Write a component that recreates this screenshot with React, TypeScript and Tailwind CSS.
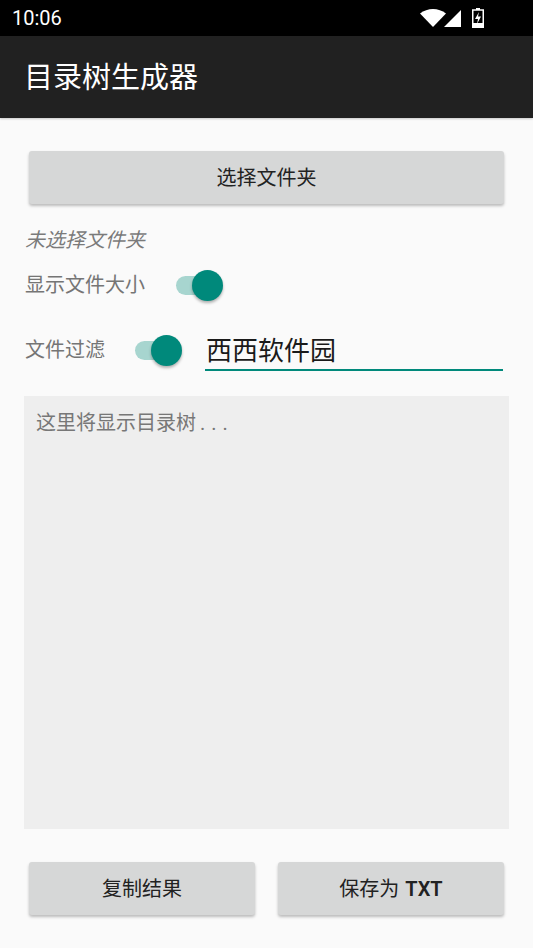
import React from "react";

const cjk = { fontFamily: 'Roboto, "Noto Sans CJK SC", sans-serif' };

function Switch() {
  return (
    <div className="relative w-[47px] h-[32px] shrink-0">
      <div className="absolute left-0 top-[7px] w-[38px] h-[19px] rounded-full bg-[#a7d5cf]" />
      <div className="absolute left-[16px] top-[1px] w-[31px] h-[31px] rounded-full bg-[#00897b] shadow-[0_2px_3px_rgba(0,0,0,0.3)]" />
    </div>
  );
}

export default function App() {
  return (
    <div className="w-[533px] h-[948px] bg-[#fafafa] flex flex-col overflow-hidden" style={cjk}>
      {/* status bar */}
      <div className="h-[36px] bg-black flex items-center px-[12px] text-white">
        <span className="text-[20px] leading-none" style={{ fontFamily: "Roboto, sans-serif" }}>10:06</span>
        <div className="ml-auto flex items-center mr-[37px]">
          <svg width="26" height="18" viewBox="0 0 26 18">
            <path d="M0 4.5 C7.5 -1.5 18.5 -1.5 26 4.5 L13 18 Z" fill="white" />
          </svg>
          <svg width="17" height="17" viewBox="0 0 17 17" className="ml-[-2px]">
            <path d="M17 0 L17 17 L0 17 Z" fill="white" />
          </svg>
          <svg width="12" height="20" viewBox="0 0 12 20" className="ml-[11px]">
            <rect x="4" y="0" width="4" height="2" fill="white" />
            <rect x="0.75" y="2" width="10.5" height="17.25" fill="none" stroke="white" strokeWidth="1.5" />
            <rect x="0" y="15" width="12" height="5" fill="white" />
            <path d="M7 4 L3 11 L6 11 L5 16 L9 8.5 L6 8.5 Z" fill="white" />
          </svg>
        </div>
      </div>
      {/* app bar */}
      <div className="h-[82px] bg-[#212121] flex items-center pl-[24px] pt-[3px] shadow-[0_1px_2px_rgba(0,0,0,0.2)]">
        <span className="text-white text-[29px] leading-none">目录树生成器</span>
      </div>
      {/* content */}
      <div className="flex flex-col px-[24px]">
        <button className="mt-[33px] mx-[5px] h-[53px] bg-[#d6d7d7] rounded-[3px] shadow-[0_2px_3px_rgba(0,0,0,0.25)] text-[20px] text-[#222] flex items-center justify-center">
          选择文件夹
        </button>
        <div className="mt-[24px] h-[24px] flex items-center text-[20px] italic text-[#7a7a7a] pl-[1px]">未选择文件夹</div>
        <div className="mt-[13px] h-[40px] flex items-center pl-[1px]">
          <span className="text-[20px] text-[#757575] w-[151px]">显示文件大小</span>
          <Switch />
        </div>
        <div className="mt-[21px] h-[48px] flex items-center pl-[1px]">
          <span className="text-[20px] text-[#757575] w-[110px]">文件过滤</span>
          <Switch />
          <div className="ml-[23px] flex-1 mr-[6px] h-[44px] border-b-2 border-[#00897b] flex items-center pl-[1px] pt-[5px] mt-[-2px]">
            <span className="text-[26px] text-[#1a1a1a] leading-none">西西软件园</span>
          </div>
        </div>
        <div className="mt-[22px] h-[433px] bg-[#eeeeee] px-[12px] pt-[17px]">
          <span className="text-[20px] text-[#777] leading-none">这里将显示目录树<span className="tracking-[6px] ml-[4px]">...</span></span>
        </div>
        <div className="mt-[33px] mx-[5px] flex gap-[23px]">
          <button className="flex-1 h-[53px] bg-[#d6d7d7] rounded-[3px] shadow-[0_2px_3px_rgba(0,0,0,0.25)] text-[20px] text-[#222] flex items-center justify-center">
            复制结果
          </button>
          <button className="flex-1 h-[53px] bg-[#d6d7d7] rounded-[3px] shadow-[0_2px_3px_rgba(0,0,0,0.25)] text-[20px] text-[#222] flex items-center justify-center">
            保存为 <span className="font-semibold ml-[6px]" style={{ fontFamily: "Roboto, sans-serif" }}>TXT</span>
          </button>
        </div>
      </div>
    </div>
  );
}
